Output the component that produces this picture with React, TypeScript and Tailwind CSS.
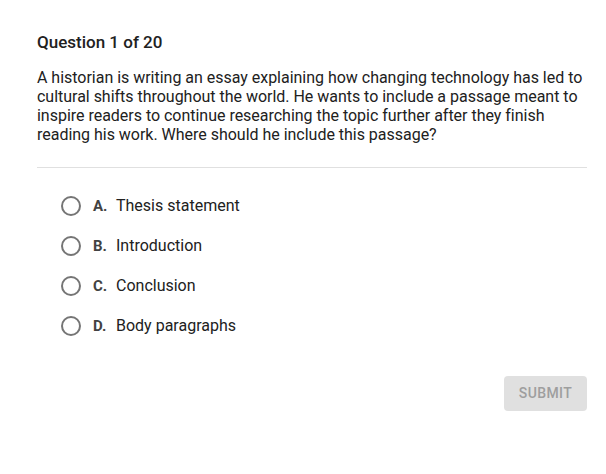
import React from 'react';

const options = [
  { letter: 'A.', text: 'Thesis statement' },
  { letter: 'B.', text: 'Introduction' },
  { letter: 'C.', text: 'Conclusion' },
  { letter: 'D.', text: 'Body paragraphs' },
];

export default function App() {
  return (
    <div className="w-[606px] h-[474px] bg-white font-['Roboto',sans-serif] text-[#212121]">
      <div className="ml-[37px] w-[550px] pt-[32px]">
        <h2 className="text-[17px] leading-[20px] font-medium">Question 1 of 20</h2>
        <p className="mt-[16px] w-[552px] text-[16px] leading-[19px] tracking-[-0.02px]">
          A historian is writing an essay explaining how changing technology has led to cultural shifts throughout the
          world. He wants to include a passage meant to inspire readers to continue researching the topic further after
          they finish reading his work. Where should he include this passage?
        </p>
        <div className="mt-[23px] h-px w-[550px] bg-[#e0e0e0]" />
        <div className="mt-[18px] flex flex-col">
          {options.map((o) => (
            <label key={o.letter} className="h-[40px] flex items-center pl-[24px]">
              <span className="w-[20px] h-[20px] rounded-full border-2 border-[#757575]" />
              <span className="ml-[12px] text-[15px] font-bold text-[#424242] w-[23px]">{o.letter}</span>
              <span className="text-[16px]">{o.text}</span>
            </label>
          ))}
        </div>
        <div className="mt-[30px] flex justify-end">
          <button className="w-[83px] h-[35px] rounded-[4px] bg-[#e0e0e0] text-[#9e9e9e] text-[14px] font-medium tracking-[0.4px]">
            SUBMIT
          </button>
        </div>
      </div>
    </div>
  );
}
